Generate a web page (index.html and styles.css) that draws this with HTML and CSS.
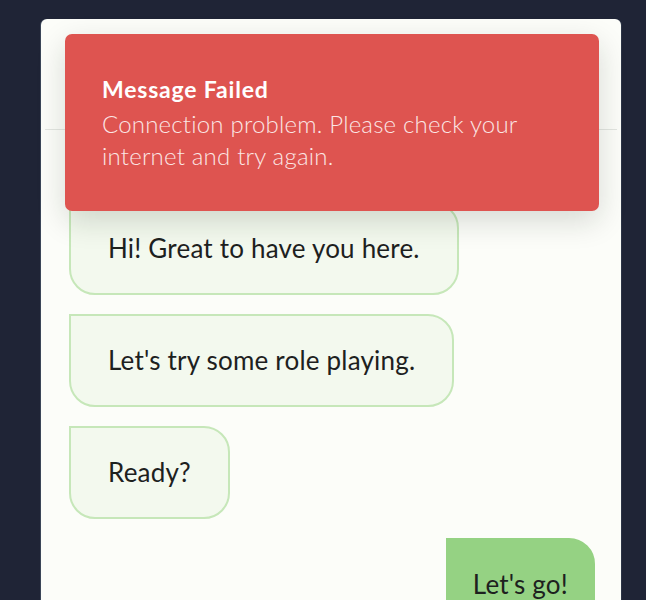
FILE: index.html
```html
<!DOCTYPE html>
<html lang="en">
<head>
<meta charset="utf-8">
<title>Chat</title>
<link rel="stylesheet" href="styles.css">
</head>
<body>
<div class="page">
  <div class="card">
    <div class="header"></div>
    <div class="messages">
      <div class="bubble">Hi! Great to have you here.</div>
      <div class="bubble">Let's try some role playing.</div>
      <div class="bubble">Ready?</div>
      <div class="bubble sent">Let's go!</div>
    </div>
    <div class="toast" role="alert">
      <div class="toast-title">Message Failed</div>
      <div class="toast-body">Connection problem. Please check your internet and try again.</div>
    </div>
  </div>
</div>
</body>
</html>
```
FILE: styles.css
```css
html, body {
  margin: 0;
  padding: 0;
}
body {
  background: #1f2436;
  width: 646px;
  height: 600px;
  overflow: hidden;
  font-family: "Lato", "Liberation Sans", sans-serif;
}
.page {
  padding: 19px 25px 0 41px;
}
.card {
  position: relative;
  background: #fcfdf9;
  border-radius: 6px;
  box-shadow: -1px 0 0 0 #3b4658, 1px 0 0 0 #2c3446;
  height: 700px;
}
.header {
  height: 110px;
  margin: 0 4px;
  border-bottom: 1px solid #e3e6e1;
}
.messages {
  display: flex;
  flex-direction: column;
  align-items: flex-start;
  gap: 19px;
  padding: 72px 26px 0 28px;
}
.bubble {
  padding: 31px 37px;
  border: 2px solid #c6e7b9;
  background: #f3f9ee;
  border-radius: 0 26px 26px 26px;
  font-size: 26px;
  font-weight: 400;
  letter-spacing: 0.2px;
  line-height: 27px;
  color: #1d211e;
}
.bubble.sent {
  align-self: flex-end;
  background: #95d283;
  border-color: #95d283;
  padding: 31px 25px;
}
.toast {
  position: absolute;
  left: 24px;
  top: 15px;
  width: 534px;
  height: 177px;
  box-sizing: border-box;
  padding: 41px 37px 0 37px;
  background: #de5450;
  border-radius: 7px;
  box-shadow: 0 10px 30px rgba(20, 30, 20, 0.16);
  color: #ffffff;
}
.toast-title {
  font-size: 23px;
  font-weight: 700;
  letter-spacing: 0.8px;
  line-height: 28px;
}
.toast-body {
  margin-top: 5px;
  font-size: 24px;
  font-weight: 300;
  letter-spacing: 0.2px;
  line-height: 32px;
  color: #fbe6e5;
}
```
